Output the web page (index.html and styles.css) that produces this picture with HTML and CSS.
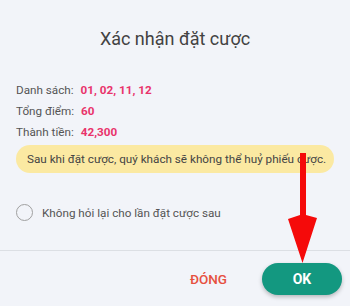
FILE: index.html
```html
<!DOCTYPE html>
<html lang="vi">
<head>
<meta charset="utf-8">
<title>Xác nhận đặt cược</title>
<link rel="stylesheet" href="styles.css">
</head>
<body>
<div class="dialog">
  <h1 class="title">Xác nhận đặt cược</h1>
  <div class="info">
    <div class="row"><span class="label">Danh sách:</span><span class="value">01, 02, 11, 12</span></div>
    <div class="row"><span class="label">Tổng điểm:</span><span class="value">60</span></div>
    <div class="row"><span class="label">Thành tiền:</span><span class="value">42,300</span></div>
  </div>
  <div class="notice">Sau khi đặt cược, quý khách sẽ không thể huỷ phiếu cược.</div>
  <label class="option"><span class="radio"></span><span class="option-text">Không hỏi lại cho lần đặt cược sau</span></label>
  <div class="footer">
    <button class="btn-close">ĐÓNG</button>
    <button class="btn-ok">OK</button>
  </div>
</div>
<svg class="arrow" width="350" height="306" viewBox="0 0 350 306" aria-hidden="true">
  <polygon points="300,153 306,153 306,215 317,218 302.5,263 288,219 300,215" fill="#f50a0a"/>
</svg>
</body>
</html>
```
FILE: styles.css
```css
html, body {
  margin: 0;
  padding: 0;
}
body {
  width: 350px;
  height: 306px;
  background: #f2f4f9;
  font-family: Roboto, "Noto Sans", sans-serif;
  position: relative;
  overflow: hidden;
}
.dialog {
  display: flex;
  flex-direction: column;
}
.title {
  margin: 0;
  padding-top: 25px;
  font-size: 18px;
  line-height: 28px;
  font-weight: 400;
  color: #424242;
  text-align: center;
}
.info {
  margin-top: 27px;
  padding: 0 16px;
}
.row {
  font-size: 11.7px;
  line-height: 21px;
  color: #555;
}
.value {
  margin-left: 7px;
  color: #e9336b;
  font-weight: 700;
}
.notice {
  margin: 2px 16px 0;
  height: 28px;
  line-height: 28px;
  padding: 0 11px;
  border-radius: 14px;
  background: #fbe9a2;
  font-size: 11.7px;
  color: #444;
  white-space: nowrap;
}
.option {
  display: flex;
  align-items: center;
  margin-top: 30px;
  padding-left: 16px;
  height: 19px;
}
.radio {
  width: 15px;
  height: 15px;
  border: 1.5px solid #a0a0a0;
  border-radius: 50%;
}
.option-text {
  margin-left: 9px;
  font-size: 11.7px;
  color: #555;
}
.footer {
  margin-top: 28px;
  border-top: 1px solid #dcdfe4;
  padding: 12px 8px 0 0;
  display: flex;
  justify-content: flex-end;
  align-items: center;
  gap: 23px;
}
.btn-close {
  border: 0;
  background: none;
  padding: 0 12px;
  font-family: inherit;
  font-size: 13.5px;
  font-weight: 500;
  color: #e6503f;
  height: 32px;
}
.btn-ok {
  border: 0;
  width: 80px;
  height: 32px;
  border-radius: 16px;
  background: #139880;
  color: #fff;
  font-family: inherit;
  font-size: 14px;
  font-weight: 700;
  box-shadow: 0 2px 4px rgba(0, 0, 0, 0.25);
}
.arrow {
  position: absolute;
  left: 0;
  top: 0;
  pointer-events: none;
}
```
